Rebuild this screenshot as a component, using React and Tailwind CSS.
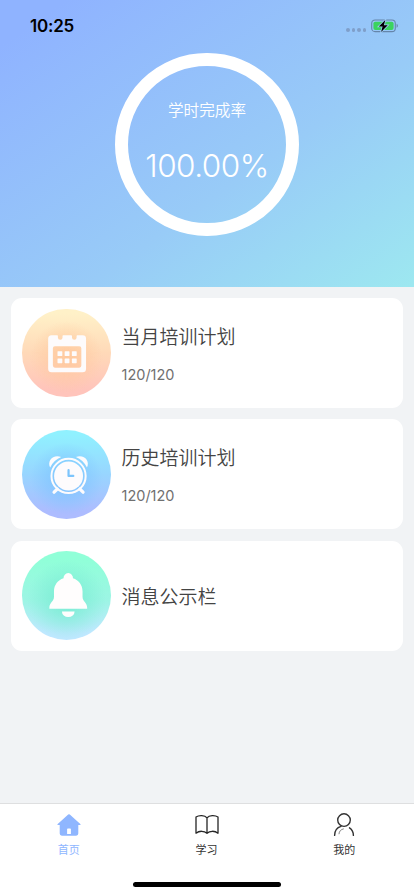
import React from 'react';

const CalendarIcon = () => (
    <svg viewBox="0 0 88 88" className="w-full h-full" fill="#fdfbfc">
        <path
            fillRule="evenodd"
            d="M29.500 26.200h5.200c.7 0 1 .4 1 1v1.200a2.300 2.300 0 0 0 4.600 0v-1.200c0-.6.3-1 1-1h7.400c.7 0 1 .4 1 1v1.200a2.300 2.300 0 0 0 4.600 0v-1.200c0-.6.3-1 1-1h5a3.400 3.400 0 0 1 3.400 3.400v29.900a3.500 3.500 0 0 1-3.500 3.500H29.500a3.500 3.500 0 0 1-3.500-3.500V29.700a3.500 3.500 0 0 1 3.500-3.500ZM32.700 37a2 2 0 0 0-2 2v17.300a2 2 0 0 0 2 2H57a2 2 0 0 0 2-2V39a2 2 0 0 0-2-2Z"
        />
        {[42, 49.1].map((y) =>
            [35.3, 42.4, 49.6].map((x) => (
                <rect key={`${x}-${y}`} x={x} y={y} width="4.8" height="4.8" rx="0.6" />
            ))
        )}
    </svg>
);

const ClockIcon = () => (
    <svg viewBox="0 0 88 88" className="w-full h-full" fill="none" stroke="#fdfbfd" strokeLinecap="round">
        <path d="M28 37.3C24.6 30.5 31.2 23.6 39 26.8C34.400 28.600 30.300 32.200 28 37.300Z" fill="#fdfbfd" stroke="none" />
        <path d="M64.600 37.300C68 30.500 61.400 23.600 53.600 26.800C58.200 28.600 62.300 32.200 64.600 37.300Z" fill="#fdfbfd" stroke="none" />
        <path d="M35 58.800 31.900 61.800M57.600 58.800 60.700 61.800" strokeWidth="3.3" />
        <circle cx="46.3" cy="45.7" r="17" strokeWidth="2" />
        <circle cx="46.3" cy="45.7" r="14.4" fill="#fdfbfd" stroke="none" />
        <path d="M46.300 40V45.700H51" stroke="#7cc4fc" strokeWidth="2.2" strokeLinejoin="round" />
    </svg>
);

const BellIcon = () => (
    <svg viewBox="0 0 88 88" className="w-full h-full" fill="#fffdfd">
        <path d="M46 22a4.700 4.700 0 0 1 4.700 5.100C56.400 29 60.200 33.800 60.200 40v5.500c0 4.800 4.600 5.500 4.600 11v.9H27.200v-.9c0-5.500 4.600-6.200 4.600-11V40c0-6.200 3.800-11 9.500-12.900A4.700 4.700 0 0 1 46 22Z" />
        <path d="M39.700 60.100h12.600a6.300 5.600 0 0 1-12.600 0Z" />
    </svg>
);

const HomeIcon = () => (
    <svg viewBox="0 0 24 24" className="w-6 h-6" fill="#8fb6ff">
        <path
            fillRule="evenodd"
            d="M11.200 1.500a1.200 1.200 0 0 1 1.600 0l10.500 9.400c.6.600.3 1.100-.4 1.100h-1.600v8.600a2.100 2.100 0 0 1-2.100 2.100H4.800a2.100 2.100 0 0 1-2.100-2.100V12H1.100c-.7 0-1-.5-.4-1.100ZM10.900 15.500a.8.800 0 0 0-.8.800v4.800h3.800v-4.800a.8.800 0 0 0-.8-.8Z"
        />
    </svg>
);

const BookIcon = () => (
    <svg viewBox="0 0 24 24" className="w-6 h-6" fill="none" stroke="#262626" strokeWidth="1.3" strokeLinejoin="round">
        <path d="M12 4.800C9.800 2 3.900 2 1 4V20.200c3.200-2.600 8.300-2.600 11 .2 2.700-2.800 7.800-2.800 11-.2V4C20.100 2 14.200 2 12 4.800ZM12 4.800V20.400" />
    </svg>
);

const UserIcon = () => (
    <svg viewBox="0 0 24 24" className="w-6 h-6" fill="none" stroke="#333" strokeWidth="1.4" strokeLinecap="round">
        <circle cx="12" cy="7.1" r="6.3" />
        <path d="M9 13.300C4.900 14.500 2.600 18 2.600 22.400M17.500 14.800c2.500 1.700 3.900 4.300 3.900 7.600" />
        <path d="M7 20.800c.2-2.600 1.800-4.300 4.400-4.900" strokeWidth="0.9" stroke="#777" />
    </svg>
);

const cards = [
    {
        title: '当月培训计划',
        count: '120/120',
        icon: CalendarIcon,
        color: 'bg-[radial-gradient(circle_at_50%_55%,#ffc99e_0%,#ffc99e00_55%),linear-gradient(180deg,#fff1c8_5%,#ffd9b8_50%,#ffc4bb_92%)]',
    },
    {
        title: '历史培训计划',
        count: '120/120',
        icon: ClockIcon,
        color: 'bg-[radial-gradient(circle_at_50%_55%,#7cc4ff_0%,#7cc4ff00_55%),linear-gradient(180deg,#90f1ff_5%,#98d5ff_50%,#adbcff_92%)]',
    },
    {
        title: '消息公示栏',
        icon: BellIcon,
        color: 'bg-[radial-gradient(circle_at_50%_55%,#78ecd2_0%,#78ecd200_60%),linear-gradient(180deg,#90ffd8_8%,#9cf5e4_55%,#bfe8ff_92%)]',
    },
];

const tabs = [
    { label: '首页', icon: HomeIcon, color: 'text-[#8fb6ff]' },
    { label: '学习', icon: BookIcon, color: 'text-[#333]' },
    { label: '我的', icon: UserIcon, color: 'text-[#333]' },
];

const StatusBar = () => (
    <div className="h-[53px] pl-[30px] pr-[15px] flex justify-between">
        <span className="pt-[14px] text-[17px] leading-6 font-semibold text-black tracking-[-0.2px]">10:25</span>
        <div className="flex pt-[19px]">
            <div className="flex gap-[2px] pt-[9px] mr-[5px]">
                {[0, 1, 2, 3].map((i) => (
                    <span key={i} className="w-[3.5px] h-[3.5px] rounded-full bg-[#7f9fca]" />
                ))}
            </div>
            <svg width="28" height="14" viewBox="0 0 28 14">
                <rect x="0.7" y="1" width="23.6" height="11.6" rx="3.4" fill="none" stroke="#6585aa" strokeWidth="1.1" />
                <rect x="2.4" y="2.7" width="20.2" height="8.2" rx="1.9" fill="#3bd35f" />
                <path d="M25.600 4.800v4a2.200 2.200 0 0 0 0-4Z" fill="#6585aa" />
                <path d="M14.300 1 7.800 7.500h3.800l-1.500 5.400 6.600-6.700h-3.800Z" fill="#000" stroke="#9dcaf5" strokeWidth="1.6" paintOrder="stroke" />
            </svg>
        </div>
    </div>
);

const App = () => {
    return (
        <div className="w-full h-[896px] flex flex-col overflow-hidden bg-[#f1f3f5] font-[Inter,'Noto_Sans_CJK_SC',sans-serif]">
            {/* Header */}
            <header className="h-[287px] shrink-0 bg-[linear-gradient(145deg,#8fb3ff_8%,#98cbf7_60%,#9de8f0_100%)]">
                <StatusBar />
                <div className="w-[184px] h-[183px] mx-auto rounded-full border-[13px] border-white flex flex-col items-center text-white">
                    <p className="mt-[33px] text-[15.6px] leading-6 font-[350]">学时完成率</p>
                    <p className="mt-[23px] text-[31.5px] leading-10 font-[350] tracking-[-0.5px] whitespace-nowrap">100.00%</p>
                </div>
            </header>

            {/* Cards */}
            <main className="flex-1 px-[11px] pt-[11px] flex flex-col gap-[11.3px]">
                {cards.map((card) => (
                    <div key={card.title} className="h-[110px] px-[11px] flex items-center bg-white rounded-[11px]">
                        <div className={`w-[88.5px] h-[88.5px] rounded-full shrink-0 ${card.color}`}>
                            <card.icon />
                        </div>
                        <div className="ml-[11px] pt-[4px] flex flex-col gap-[15px]">
                            <h3 className="text-[19px] leading-6 font-[350] text-[#444]">{card.title}</h3>
                            {card.count && <p className="text-[14.5px] leading-5 text-[#707070]">{card.count}</p>}
                        </div>
                    </div>
                ))}
            </main>

            {/* Tab bar */}
            <nav className="h-[93px] shrink-0 bg-white border-t border-[#dedfe0] flex flex-col">
                <div className="flex pt-[9px] pr-px">
                    {tabs.map((tab) => (
                        <div key={tab.label} className={`flex-1 flex flex-col items-center ${tab.color}`}>
                            <tab.icon />
                            <span className="mt-[5px] text-[11px] leading-4">{tab.label}</span>
                        </div>
                    ))}
                </div>
                <div className="mt-auto mb-[9px] mx-auto w-[148px] h-[5.5px] rounded-full bg-black" />
            </nav>
        </div>
    );
};

export default App;
